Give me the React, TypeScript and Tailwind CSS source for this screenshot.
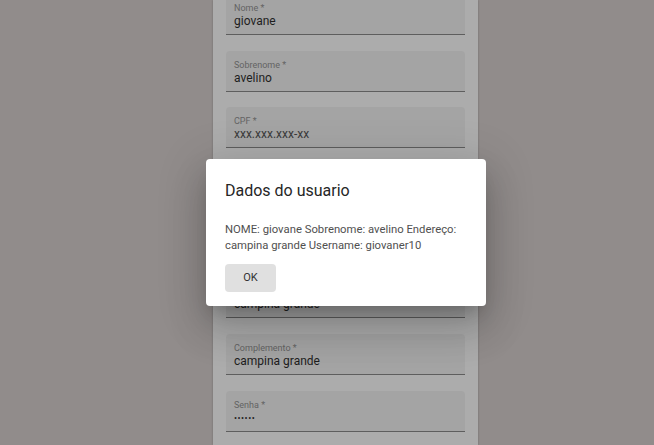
import React from "react";

type FieldProps = { label: string; value: string; muted?: boolean; password?: boolean };

function Field({ label, value, muted, password }: FieldProps) {
  return (
    <div className="h-[41px] rounded-t-[4px] bg-[#a4a4a4] border-b border-[#5e5e5e] px-[8px] pt-[9px]">
      <div className="text-[9px] leading-[11px] text-[#636363]">{label} *</div>
      {password ? (
        <div className="text-[9px] leading-[14px] text-[#222] tracking-[0.5px]">••••••</div>
      ) : (
        <div className={`text-[12px] leading-[14px] ${muted ? "text-[#3a3a3a]" : "text-[#1e1e1e]"}`}>{value}</div>
      )}
    </div>
  );
}

export default function App() {
  const fields: FieldProps[] = [
    { label: "Nome", value: "giovane" },
    { label: "Sobrenome", value: "avelino" },
    { label: "CPF", value: "xxx.xxx.xxx-xx", muted: true },
    { label: "Email", value: "giovane@email.com" },
    { label: "Username", value: "giovaner10" },
    { label: "Endereço", value: "campina grande" },
    { label: "Complemento", value: "campina grande" },
    { label: "Senha", value: "", password: true },
  ];
  return (
    <div
      className="relative w-[654px] h-[445px] overflow-hidden bg-[#918c8b] flex pl-[213px]"
      style={{ fontFamily: "Roboto, 'Liberation Sans', sans-serif" }}
    >
      <div className="w-[265px] h-full bg-[#acacac] shadow-[0_0_2px_rgba(0,0,0,0.25)] px-[13px]">
        <div className="flex flex-col gap-[15.67px] mt-[-6px]">
          {fields.map((f) => (
            <Field key={f.label} {...f} />
          ))}
        </div>
      </div>

      <div className="absolute left-[206px] top-[159px] w-[280px] h-[147px] bg-white rounded-[4px] shadow-[0_11px_15px_-7px_rgba(0,0,0,0.2),0_24px_38px_3px_rgba(0,0,0,0.14),0_9px_46px_8px_rgba(0,0,0,0.12)] px-[19px] pt-[20px]">
        <div className="text-[16px] leading-[24px] text-[#262626]">Dados do usuario</div>
        <div className="mt-[19px] text-[11.3px] leading-[16px] text-[#505050]">
          NOME: giovane Sobrenome: avelino Endereço: campina grande Username: giovaner10
        </div>
        <button className="mt-[10px] w-[51px] h-[28px] rounded-[4px] bg-[#e0e0e0] text-[11px] font-normal text-[#333] flex items-center justify-center">
          OK
        </button>
      </div>
    </div>
  );
}
